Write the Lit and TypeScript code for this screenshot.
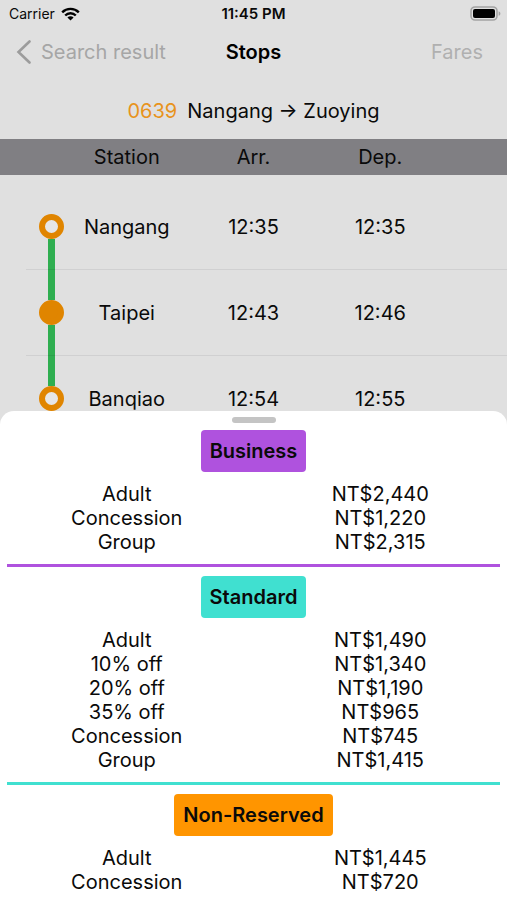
import { LitElement, html, css } from "lit";
import { customElement } from "lit/decorators.js";
import { classMap } from "lit/directives/class-map.js";

interface Stop {
  name: string;
  arrival: string;
  departure: string;
  major?: boolean;
}

interface FareClass {
  id: string;
  title: string;
  fares: [string, string][];
}

const STOPS: Stop[] = [
  { name: "Nangang", arrival: "12:35", departure: "12:35" },
  { name: "Taipei", arrival: "12:43", departure: "12:46", major: true },
  { name: "Banqiao", arrival: "12:54", departure: "12:55" },
];

const CLASSES: FareClass[] = [
  {
    id: "business",
    title: "Business",
    fares: [
      ["Adult", "NT$2,440"],
      ["Concession", "NT$1,220"],
      ["Group", "NT$2,315"],
    ],
  },
  {
    id: "standard",
    title: "Standard",
    fares: [
      ["Adult", "NT$1,490"],
      ["10% off", "NT$1,340"],
      ["20% off", "NT$1,190"],
      ["35% off", "NT$965"],
      ["Concession", "NT$745"],
      ["Group", "NT$1,415"],
    ],
  },
  {
    id: "nonreserved",
    title: "Non-Reserved",
    fares: [
      ["Adult", "NT$1,445"],
      ["Concession", "NT$720"],
    ],
  },
];

@customElement("status-bar")
class StatusBar extends LitElement {
  static styles = css`
    :host {
      display: grid;
      grid-template-columns: 1fr auto 1fr;
      align-items: center;
      height: 27px;
      font-size: 14px;
    }
    .carrier {
      display: flex;
      align-items: center;
      gap: 6px;
      margin-left: 9px;
    }
    .time {
      font-size: 15px;
      font-weight: 600;
    }
    .battery {
      justify-self: end;
      margin-right: 6px;
    }
    svg {
      display: block;
    }
  `;
  render() {
    return html`
      <span class="carrier">
        Carrier
        <svg width="19" height="14" viewBox="0 0 19 14" aria-hidden="true">
          <g fill="none" stroke="#000" stroke-width="2.4">
            <path d="M1.2 5.3a11.8 11.8 0 0 1 16.6 0" />
            <path d="M4.2 8.5a7.5 7.5 0 0 1 10.6 0" />
          </g>
          <path d="M9.5 13.6 6.4 10.5a4.4 4.4 0 0 1 6.2 0z" />
        </svg>
      </span>
      <span class="time">11:45 PM</span>
      <svg class="battery" width="31" height="15" viewBox="0 0 31 15" aria-hidden="true">
        <rect x="1" y="1" width="26" height="13" rx="4" fill="none" stroke="#a3a3a3" stroke-width="1.6" />
        <rect x="3" y="3" width="22" height="9" rx="2" />
        <path d="M28.6 5.2c2.4.8 2.4 3.8 0 4.6z" fill="#a3a3a3" />
      </svg>
    `;
  }
}

@customElement("stop-list")
class StopList extends LitElement {
  static styles = css`
    :host {
      display: block;
    }
    table {
      width: 100%;
      table-layout: fixed;
      border-collapse: collapse;
      text-align: center;
    }
    .edge {
      width: 12.5%;
    }
    th,
    td {
      padding: 0;
      font-weight: 400;
    }
    thead th {
      height: 36px;
      background: #807f83;
    }
    tbody::before {
      content: "";
      display: block;
      height: 9px;
    }
    tbody tr {
      background: linear-gradient(#d0d0d1, #d0d0d1) 26px 100% / 100% 1px no-repeat;
    }
    tbody tr td {
      height: 86px;
    }
    .rail {
      display: flex;
      flex-direction: column;
      align-items: center;
      width: 25px;
      height: 86px;
      margin-left: 39px;
    }
    .line {
      box-sizing: border-box;
      flex: 1;
      width: 7px;
      background: #2fae50;
    }
    .line:last-child {
      border-bottom: 1px solid #2c9f4b;
    }
    .start {
      background: none;
    }
    .dot {
      box-sizing: border-box;
      width: 25px;
      height: 25px;
      border: 6px solid #e08500;
      border-radius: 50%;
      background: #e6e6e6;
    }
    .major {
      background: #e08500;
    }
  `;
  render() {
    return html`
      <table>
        <colgroup>
          <col class="edge" />
          <col />
          <col />
          <col />
          <col class="edge" />
        </colgroup>
        <thead>
          <tr>
            <th></th>
            <th scope="col">Station</th>
            <th scope="col">Arr.</th>
            <th scope="col">Dep.</th>
            <th></th>
          </tr>
        </thead>
        <tbody>
          ${STOPS.map(
            (s, i) => html`
              <tr>
                <td>
                  <div class="rail">
                    <span class=${classMap({ line: true, start: i === 0 })}></span>
                    <span class=${classMap({ dot: true, major: !!s.major })}></span>
                    <span class="line"></span>
                  </div>
                </td>
                <td>${s.name}</td>
                <td>${s.arrival}</td>
                <td>${s.departure}</td>
                <td></td>
              </tr>
            `
          )}
        </tbody>
      </table>
    `;
  }
}

@customElement("fare-sheet")
class FareSheet extends LitElement {
  static styles = css`
    :host {
      display: block;
      padding: 6px 0;
      border-radius: 14px 14px 0 0;
      background: #fff;
    }
    .handle {
      width: 44px;
      height: 6px;
      margin: 0 auto 7px;
      border-radius: 3px;
      background: #c4c4c4;
    }
    section {
      display: flex;
      flex-direction: column;
      align-items: center;
      gap: 10px;
    }
    hr {
      height: 3px;
      margin: 10px 7px 9px;
      border: 0;
    }
    .business + hr,
    .business h2 {
      background: #af52de;
    }
    .standard + hr,
    .standard h2 {
      background: #40e0d0;
    }
    .nonreserved h2 {
      background: #ff9500;
    }
    h2 {
      margin: 0;
      padding: 0 9px;
      border-radius: 4px;
      font-size: 20px;
      font-weight: 600;
      line-height: 42px;
    }
    table {
      width: 100%;
      table-layout: fixed;
      border-collapse: collapse;
      line-height: 24px;
      text-align: center;
    }
    th,
    td {
      padding: 0;
      font-weight: 400;
    }
  `;
  render() {
    return html`
      <div class="handle"></div>
      ${CLASSES.map(
        (c, i) => html`
          <section class=${c.id} aria-labelledby=${c.id}>
            <h2 id=${c.id}>${c.title}</h2>
            <table>
              <tbody>
                ${c.fares.map(
                  ([label, price]) => html`<tr><th scope="row">${label}</th><td>${price}</td></tr>`
                )}
              </tbody>
            </table>
          </section>
          ${i < CLASSES.length - 1 ? html`<hr />` : ""}
        `
      )}
    `;
  }
}

@customElement("app-root")
class AppRoot extends LitElement {
  static styles = css`
    :host {
      display: block;
      position: relative;
      min-height: 100vh;
      overflow: hidden;
      background: #e0e0e0;
      color: #0a0a0a;
      font-family: Inter, "Liberation Sans", sans-serif;
      font-size: 20px;
      line-height: 24px;
    }
    nav {
      display: grid;
      grid-template-columns: 1fr auto 1fr;
      align-items: center;
      height: 50px;
    }
    button {
      padding: 0;
      border: 0;
      background: none;
      color: #a6a6a6;
      font: inherit;
    }
    .back {
      justify-self: start;
      display: flex;
      align-items: center;
      gap: 9px;
      margin-left: 16px;
    }
    .fares {
      justify-self: end;
      margin-right: 24px;
      color: #b0b0b0;
    }
    h1 {
      margin: 0;
      font-size: 20px;
      font-weight: 600;
      color: #000;
    }
    .train {
      display: flex;
      justify-content: center;
      gap: 10px;
      margin: 0;
      padding: 22px 0 16px;
    }
    .number {
      color: #e8931c;
    }
    .sheet {
      position: absolute;
      left: 0;
      right: 0;
      bottom: 0;
    }
  `;
  render() {
    return html`
      <status-bar></status-bar>
      <nav>
        <button class="back">
          <svg width="16" height="24" viewBox="0 0 16 24" aria-hidden="true">
            <path d="M13.5 1.5 2.5 12l11 10.5" fill="none" stroke="#9c9c9c" stroke-width="2.6" stroke-linecap="round" />
          </svg>
          Search result
        </button>
        <h1>Stops</h1>
        <button class="fares">Fares</button>
      </nav>
      <p class="train">
        <span class="number">0639</span>
        <span>Nangang → Zuoying</span>
      </p>
      <stop-list></stop-list>
      <fare-sheet class="sheet"></fare-sheet>
    `;
  }
}
